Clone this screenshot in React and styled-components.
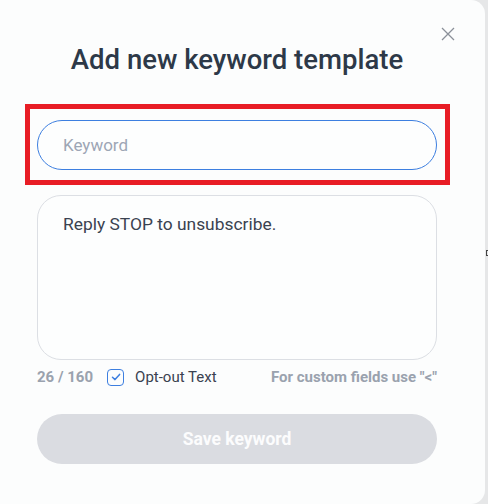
import styled, { createGlobalStyle } from 'styled-components'

const GlobalStyle = createGlobalStyle`
  html, body {
    margin: 0;
    padding: 0;
    background: #e6e7e8;
    font-family: Roboto, 'Liberation Sans', sans-serif;
  }
`

const Page = styled.div`
  position: relative;
  width: 488px;
  height: 504px;
  overflow: hidden;
`

const Modal = styled.div`
  width: 485px;
  height: 504px;
  box-sizing: border-box;
  background: #fcfdfd;
  border-radius: 0 14px 14px 0;
  padding: 43px 48px 0 37px;
  display: flex;
  flex-direction: column;
  position: relative;
`

const CloseButton = styled.button`
  position: absolute;
  top: 25px;
  right: 28px;
  width: 18px;
  height: 18px;
  padding: 0;
  border: none;
  background: transparent;
  cursor: pointer;
  display: flex;
  align-items: center;
  justify-content: center;
`

const Title = styled.h2`
  margin: 0;
  text-align: center;
  font-size: 27.5px;
  font-weight: 500;
  color: #2d3948;
  line-height: 34px;
`

const Highlight = styled.div`
  margin: 27px -13px 0 -12px;
  border: 5px solid #e81d25;
  padding: 11px 8px 10px 7px;
`

const KeywordInput = styled.input`
  display: block;
  width: 100%;
  height: 50px;
  box-sizing: border-box;
  border: 1px solid #3d7fe0;
  border-radius: 25px;
  padding: 0 25px;
  font-family: inherit;
  font-size: 17px;
  color: #333c4a;
  background: #fdfefe;
  outline: none;
  &::placeholder {
    color: #9da6b5;
  }
`

const MessageBox = styled.textarea`
  margin-top: 10px;
  width: 100%;
  height: 165px;
  box-sizing: border-box;
  border: 1px solid #dcdfe4;
  border-radius: 24px;
  padding: 17px 25px;
  font-family: inherit;
  font-size: 17.4px;
  line-height: 22px;
  color: #3a4250;
  background: #fdfefe;
  resize: none;
  outline: none;
`

const Footer = styled.div`
  display: flex;
  align-items: center;
  height: 20px;
  margin-top: 7px;
  font-size: 15px;
`

const Counter = styled.span`
  font-weight: 700;
  color: #9aa2ae;
  margin-right: 14px;
`

const CheckLabel = styled.label`
  display: flex;
  align-items: center;
  gap: 11px;
  color: #3a4250;
  cursor: pointer;
`

const CheckBox = styled.span`
  width: 15px;
  height: 15px;
  border: 1.5px solid #3d7fe0;
  border-radius: 4px;
  display: flex;
  align-items: center;
  justify-content: center;
`

const Hint = styled.span`
  margin-left: auto;
  font-weight: 700;
  color: #9aa2ae;
`

const SaveButton = styled.button`
  margin-top: 27px;
  width: 100%;
  height: 50px;
  border: none;
  border-radius: 25px;
  background: #dadce1;
  color: #fcfcfd;
  font-family: inherit;
  font-size: 17.5px;
  font-weight: 700;
`

const ScrollMark = styled.span`
  position: absolute;
  left: 486px;
  top: 250px;
  width: 3px;
  height: 6px;
  box-sizing: border-box;
  border: 1px solid #444;
  border-right: none;
`

export default function App() {
  return (
    <>
      <GlobalStyle />
      <Page>
        <Modal>
          <CloseButton aria-label="Close">
            <svg width="16" height="16" viewBox="0 0 16 16">
              <path d="M2 2L14 14M14 2L2 14" stroke="#8b9099" strokeWidth="1.3" />
            </svg>
          </CloseButton>
          <Title>Add new keyword template</Title>
          <Highlight>
            <KeywordInput placeholder="Keyword" />
          </Highlight>
          <MessageBox defaultValue="Reply STOP to unsubscribe." />
          <Footer>
            <Counter>26 / 160</Counter>
            <CheckLabel>
              <CheckBox>
                <svg width="10" height="10" viewBox="0 0 10 10">
                  <path d="M1.5 5.3L4 7.6L8.6 2.4" fill="none" stroke="#3d7fe0" strokeWidth="1.5" strokeLinecap="round" strokeLinejoin="round" />
                </svg>
              </CheckBox>
              Opt-out Text
            </CheckLabel>
            <Hint>For custom fields use "&lt;"</Hint>
          </Footer>
          <SaveButton disabled>Save keyword</SaveButton>
        </Modal>
        <ScrollMark />
      </Page>
    </>
  )
}
